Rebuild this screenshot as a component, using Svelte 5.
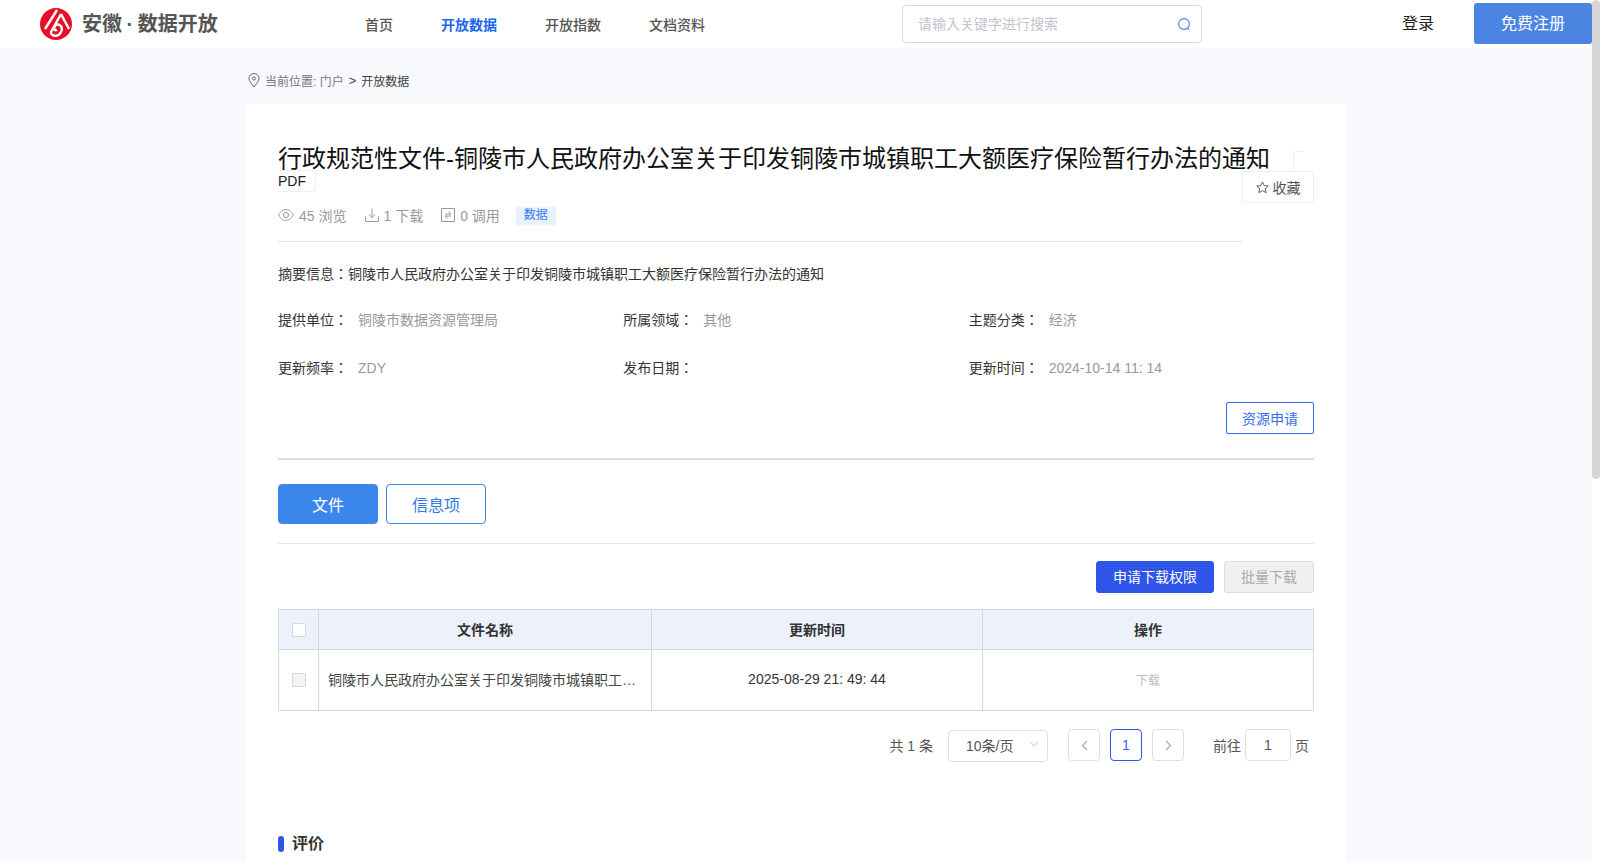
<script>
  const nav = ["首页", "开放数据", "开放指数", "文档资料"];
  const info = [
    ["提供单位", "铜陵市数据资源管理局"],
    ["所属领域", "其他"],
    ["主题分类", "经济"],
    ["更新频率", "ZDY"],
    ["发布日期", ""],
    ["更新时间", "2024-10-14 11: 14"]
  ];
</script>

<div class="root">
  <div class="page">
    <header>
      <div class="logo">
        <svg width="32" height="32" viewBox="0 0 32 32" fill="none" stroke="#fff" stroke-width="2.4">
          <circle cx="16" cy="16" r="16" fill="#e60f26" stroke="none" />
          <path d="M17 2 L5 21" />
          <path d="M21 6 L29 21" />
          <path d="M21 6 L11 24 C11 28 18 30 21 24 C24 19 18 14 15 18 C13 21 15 23 17 22" />
        </svg>
        <span>安徽 <b>·</b> 数据开放</span>
      </div>
      <nav>
        {#each nav as item, i}
          <span class:active={i === 1}>{item}</span>
        {/each}
      </nav>
      <div class="search">
        <span>请输入关键字进行搜索</span>
        <svg width="14" height="14" viewBox="0 0 14 14" fill="none" stroke="#3f7fee" stroke-width="1.1">
          <circle cx="7" cy="7" r="5.4" />
          <path d="M10.2 11.2 L12 12.6" />
        </svg>
      </div>
      <span class="login">登录</span>
      <span class="register">免费注册</span>
    </header>

    <div class="crumb">
      <svg width="12" height="15" viewBox="0 0 12 15" fill="none" stroke="#666" stroke-width="1">
        <path d="M6 14 C3.5 10.5 1 8.2 1 5.5 A5 5 0 0 1 11 5.5 C11 8.2 8.5 10.5 6 14 Z" />
        <circle cx="6" cy="5.5" r="1.6" />
      </svg>
      <span class="muted">当前位置: 门户</span>
      <span class="gt">&gt;</span>
      <span>开放数据</span>
    </div>

    <main>
      <h1>行政规范性文件-铜陵市人民政府办公室关于印发铜陵市城镇职工大额医疗保险暂行办法的通知<span class="type"><wbr />PDF</span></h1>

      <div class="meta-row">
        <div class="meta-main">
          <div class="meta">
            <span class="stat views">
              <svg width="16" height="12" viewBox="0 0 16 12" fill="none" stroke="#999" stroke-width="1">
                <path d="M.6 6 C3 2 5.5 .6 8 .6 S13 2 15.4 6 C13 10 10.5 11.4 8 11.4 S3 10 .6 6 Z" />
                <circle cx="8" cy="6" r="2.6" />
              </svg>
              45 浏览
            </span>
            <span class="stat downloads">
              <svg width="14" height="14" viewBox="0 0 14 14" fill="none" stroke="#999" stroke-width="1">
                <path d="M7 .5 V9.5 M3.8 6.4 L7 9.6 L10.2 6.4 M.5 8.5 V13.5 H13.5 V8.5" />
              </svg>
              1 下载
            </span>
            <span class="stat calls">
              <svg width="14" height="14" viewBox="0 0 14 14" fill="none" stroke="#999" stroke-width="1">
                <path d="M.5 .5 H13.5 V13.5 H.5 Z M4 6 H10 L7.6 3.6 M10 8 H4 L6.4 10.4" />
              </svg>
              0 调用
            </span>
            <span class="badge">数据</span>
          </div>
        </div>
        <button class="fav">
          <svg width="13" height="13" viewBox="0 0 14 14" fill="none" stroke="#555" stroke-width="1">
            <path d="M7 1 L8.8 5 L13.2 5.4 L9.9 8.3 L10.9 12.6 L7 10.4 L3.1 12.6 L4.1 8.3 L.8 5.4 L5.2 5 Z" />
          </svg>
          收藏
        </button>
      </div>

      <p class="summary">摘要信息：铜陵市人民政府办公室关于印发铜陵市城镇职工大额医疗保险暂行办法的通知</p>

      <div class="info">
        {#each info as [label, value]}
          <div class="field">
            <span class="label">{label}：</span>
            <span class="value">{value}</span>
          </div>
        {/each}
      </div>

      <div class="apply-row">
        <button class="apply">资源申请</button>
      </div>

      <div class="tabs">
        <button class="tab on">文件</button>
        <button class="tab">信息项</button>
      </div>

      <div class="actions">
        <button class="primary">申请下载权限</button>
        <button class="disabled">批量下载</button>
      </div>

      <div class="table">
        <div class="cell head"><i class="check"></i></div>
        <div class="cell head label">文件名称</div>
        <div class="cell head label">更新时间</div>
        <div class="cell head label">操作</div>
        <div class="cell"><i class="check off"></i></div>
        <div class="cell name label"><span>铜陵市人民政府办公室关于印发铜陵市城镇职工…</span></div>
        <div class="cell label">2025-08-29 21: 49: 44</div>
        <div class="cell dl label">下载</div>
      </div>

      <div class="pager">
        <span class="total">共 1 条</span>
        <div class="size">
          <span>10条/页</span>
          <svg width="10" height="6" viewBox="0 0 10 6" fill="none" stroke="#c8c8c8" stroke-width="1">
            <path d="M1 1 L5 5 L9 1" />
          </svg>
        </div>
        <button class="pg prev">
          <svg width="7" height="11" viewBox="0 0 7 11" fill="none" stroke="#aaa" stroke-width="1.2"><path d="M6 1 L1.5 5.5 L6 10" /></svg>
        </button>
        <button class="pg cur">1</button>
        <button class="pg">
          <svg width="7" height="11" viewBox="0 0 7 11" fill="none" stroke="#aaa" stroke-width="1.2"><path d="M1 1 L5.5 5.5 L1 10" /></svg>
        </button>
        <span class="goto">前往</span>
        <div class="jump">1</div>
        <span>页</span>
      </div>

      <h2>评价</h2>
    </main>
  </div>
  <aside class="bar"><div class="thumb"></div></aside>
</div>

<style>
  :global(body) {
    margin: 0;
    font-family: "Liberation Sans", "Noto Sans CJK JP", sans-serif;
  }
  .root {
    display: flex;
    height: 861px;
    overflow: hidden;
    background: #f7f9fd;
    color: #333;
    font-size: 14px;
  }
  .page {
    flex: 1;
    min-width: 0;
  }
  .bar {
    width: 8px;
    background: #fff;
  }
  .thumb {
    height: 479px;
    background: #d6d6d6;
    border-radius: 4px;
  }
  button {
    font: inherit;
    padding: 0;
    cursor: pointer;
  }

  header {
    height: 48px;
    background: #fff;
    display: flex;
    align-items: center;
  }
  .logo {
    display: flex;
    align-items: center;
    gap: 10px;
    margin-left: 40px;
    width: 325px;
    font-size: 20px;
    font-weight: 700;
    color: #555;
    white-space: nowrap;
    word-spacing: -1px;
  }
  .logo span {
    margin-top: -3px;
  }
  nav {
    display: flex;
    gap: 48px;
    width: 537px;
    font-weight: 500;
    color: #555;
    margin-top: -1px;
  }
  nav .active {
    color: #1f66ee;
    font-weight: 700;
  }
  .search {
    width: 300px;
    height: 38px;
    box-sizing: border-box;
    border: 1px solid #d9dbe0;
    border-radius: 4px;
    display: flex;
    align-items: center;
    justify-content: space-between;
    padding: 0 10px 0 15px;
    color: #c0c4cc;
  }
  .search span {
    margin-top: -2px;
  }
  .login {
    margin-left: 200px;
    font-size: 16px;
    color: #222;
    margin-top: -5px;
  }
  .register {
    margin-left: 40px;
    width: 118px;
    height: 41px;
    margin-top: -1px;
    background: #4c84e2;
    border-radius: 3px;
    color: #fff;
    font-size: 16px;
    display: flex;
    align-items: center;
    justify-content: center;
    padding-bottom: 3px;
    box-sizing: border-box;
  }

  .crumb {
    height: 56px;
    width: 1100px;
    margin: 0 auto;
    padding: 8px 0 0 2px;
    display: flex;
    align-items: center;
    gap: 5px;
    font-size: 12px;
    color: #444;
    box-sizing: border-box;
  }
  .crumb .muted {
    color: #777;
  }
  .crumb .gt {
    font-size: 13px;
  }

  main {
    width: 1100px;
    box-sizing: border-box;
    margin: 0 auto;
    background: #fff;
    padding: 32px;
    height: 800px;
  }
  h1 {
    margin: 14px 0 6px;
    font-size: 24px;
    font-weight: 400;
    line-height: 18px;
    color: #111;
  }
  .type {
    font-size: 14px;
    line-height: 14px;
    margin-left: 23px;
    padding: 2px 9px 2px 10px;
    border: 1px solid #eee;
    border-radius: 4px;
    color: #222;
  }
  .meta-row {
    display: flex;
  }
  .meta-main {
    flex: 1;
    height: 47px;
    border-bottom: 1px solid #e5e5e5;
  }
  .meta {
    display: flex;
    align-items: center;
    height: 42px;
    color: #999;
  }
  .stat {
    display: flex;
    align-items: center;
    gap: 4px;
    margin-right: 18px;
    white-space: nowrap;
  }
  .stat.views {
    gap: 5px;
    margin-right: 19px;
  }
  .stat.calls {
    gap: 5px;
  }
  .badge {
    width: 40px;
    height: 18px;
    line-height: 16px;
    background: #e8f1fe;
    color: #3b7bf0;
    font-size: 12px;
    text-align: center;
    border-radius: 2px;
    margin: 1px 0 0 -2px;
  }
  .fav {
    width: 72px;
    height: 32px;
    margin-top: -23px;
    background: #fff;
    border: 1px solid #eee;
    border-radius: 3px;
    color: #555;
    display: flex;
    align-items: center;
    justify-content: center;
    gap: 4px;
  }
  .summary {
    margin: -1px 0 0;
    height: 66px;
    line-height: 66px;
  }
  .info {
    display: grid;
    grid-template-columns: repeat(3, 1fr);
    grid-auto-rows: 48px;
    margin-top: 2px;
  }
  .field {
    display: flex;
    gap: 10px;
    line-height: 22px;
  }
  .value {
    color: #999;
  }
  .apply-row {
    display: flex;
    justify-content: flex-end;
    border-bottom: 2px solid #ddd;
    padding-bottom: 24px;
    margin-top: -3px;
  }
  .apply {
    width: 88px;
    height: 32px;
    background: #fff;
    border: 1px solid #2f6fed;
    border-radius: 2px;
    color: #2f6fed;
  }
  .tabs {
    display: flex;
    gap: 8px;
    padding: 24px 0 19px;
    border-bottom: 1px solid #e5e5e5;
  }
  .tab {
    width: 100px;
    height: 40px;
    background: #fff;
    border: 1px solid #3a86ea;
    border-radius: 4px;
    color: #2f7ae5;
    font-size: 16px;
  }
  .tab.on {
    background: #3a86ea;
    color: #fff;
  }
  .actions {
    display: flex;
    justify-content: flex-end;
    gap: 10px;
    padding: 17px 0 16px;
  }
  .actions button {
    height: 32px;
    border-radius: 3px;
    padding-bottom: 2px;
  }
  .primary {
    width: 118px;
    background: #2e54e8;
    border: 1px solid #2e54e8;
    color: #fff;
  }
  .disabled {
    width: 90px;
    background: #f0f0f0;
    border: 1px solid #ddd;
    color: #aaa;
  }

  .table {
    display: grid;
    grid-template-columns: 40px 333px 331px 1fr;
    grid-template-rows: 40px 61px;
    border-top: 1px solid #d3d7e0;
    border-left: 1px solid #d3d7e0;
    box-sizing: border-box;
  }
  .cell {
    display: flex;
    align-items: center;
    justify-content: center;
    border-right: 1px solid #d3d7e0;
    border-bottom: 1px solid #d3d7e0;
    min-width: 0;
  }
  .cell.label {
    padding-bottom: 2px;
  }
  .cell.head {
    background: #ecf1fb;
    font-weight: 700;
  }
  .cell.name {
    justify-content: flex-start;
    padding: 0 6px 3px 9px;
    color: #444;
  }
  .cell.dl {
    font-size: 12px;
    color: #bbb;
  }
  .check {
    width: 14px;
    height: 14px;
    box-sizing: border-box;
    background: #fff;
    border: 1px solid #d5d8de;
    border-radius: 2px;
  }
  .check.off {
    background: #f2f3f5;
  }

  .pager {
    display: flex;
    align-items: center;
    justify-content: flex-end;
    height: 32px;
    margin-top: 18px;
    padding-right: 5px;
    color: #555;
  }
  .total {
    margin-right: 15px;
  }
  .size {
    width: 100px;
    height: 32px;
    box-sizing: border-box;
    border: 1px solid #dcdfe6;
    border-radius: 4px;
    display: flex;
    align-items: center;
    justify-content: space-between;
    padding: 0 8px 4px 17px;
    margin: 1px 20px 0 0;
  }
  .size span {
    padding-top: 3px;
  }
  .pg {
    width: 32px;
    height: 32px;
    background: #fff;
    border: 1px solid #dcdfe6;
    border-radius: 4px;
    margin-right: 10px;
    display: flex;
    align-items: center;
    justify-content: center;
  }
  .pg.cur {
    border-color: #2e54e8;
    color: #2e6cf0;
  }
  .goto {
    margin: 0 4px 0 19px;
  }
  .jump {
    width: 46px;
    height: 32px;
    box-sizing: border-box;
    border: 1px solid #dcdfe6;
    border-radius: 4px;
    display: flex;
    align-items: center;
    justify-content: center;
    margin-right: 4px;
  }

  h2 {
    margin: 75px 0 0;
    font-size: 16px;
    line-height: 16px;
    font-weight: 700;
    color: #333;
    display: flex;
    align-items: center;
    gap: 8px;
  }
  h2::before {
    content: "";
    width: 6px;
    height: 16px;
    border-radius: 3px;
    background: #2e54e8;
  }
</style>
